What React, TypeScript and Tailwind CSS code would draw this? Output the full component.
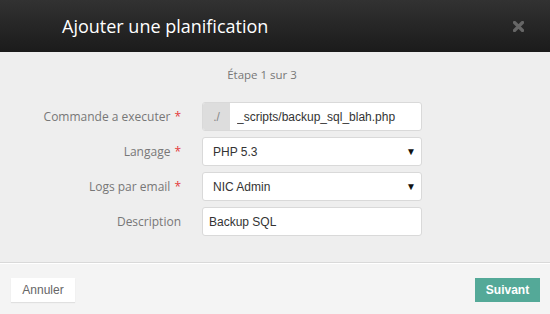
import { useState } from "react";

const labelFont = { fontFamily: '"Open Sans", "Noto Sans", sans-serif' };

function Label({ text, required }: { text: string; required?: boolean }) {
  return (
    <label className="w-[202px] shrink-0 pr-[21px] text-right text-[12px] text-[#777]" style={labelFont}>
      {text}
      {required && <span className="ml-1 text-[#e4393c]">*</span>}
    </label>
  );
}

export default function App() {
  const [cmd, setCmd] = useState("_scripts/backup_sql_blah.php");
  const [lang, setLang] = useState("PHP 5.3");
  const [logs, setLogs] = useState("NIC Admin");
  const [desc, setDesc] = useState("Backup SQL");

  return (
    <div className="flex h-[314px] w-[550px] flex-col bg-[#eeeeee] font-['Liberation_Sans',Arial,sans-serif]">
      {/* header */}
      <div className="flex h-[52px] shrink-0 items-center justify-between bg-gradient-to-b from-[#323232] to-[#1b1b1b] pl-[62px] pr-[26px]">
        <h1 className="text-[18px] leading-none text-white" style={labelFont}>
          Ajouter une planification
        </h1>
        <button className="text-[#666]" aria-label="Fermer">
          <svg width="11" height="11" viewBox="0 0 11 11">
            <path d="M1.5 1.5 L9.5 9.5 M9.5 1.5 L1.5 9.5" stroke="currentColor" strokeWidth="3.2" strokeLinecap="round" />
          </svg>
        </button>
      </div>

      {/* body */}
      <div className="flex flex-1 flex-col">
        <p className="pr-[26px] pt-[14px] text-center text-[11.5px] text-[#777]" style={labelFont}>
          Étape 1 sur 3
        </p>

        <div className="mt-[19px] flex flex-col gap-[6px]">
          <div className="flex items-center">
            <Label text="Commande a executer" required />
            <div className="flex h-[29px] w-[220px] overflow-hidden rounded-[3px] border border-[#d9d9d9] bg-white">
              <span className="flex w-[27px] shrink-0 items-center justify-center bg-[#dddddd] text-[12px] text-[#888]">./</span>
              <input
                value={cmd}
                onChange={(e) => setCmd(e.target.value)}
                className="min-w-0 flex-1 px-[7px] text-[12px] text-[#333] outline-none"
              />
            </div>
          </div>

          <div className="flex items-center">
            <Label text="Langage" required />
            <SelectBox value={lang} onChange={setLang} options={["PHP 5.3", "PHP 5.4", "PHP 5.5"]} />
          </div>

          <div className="flex items-center">
            <Label text="Logs par email" required />
            <SelectBox value={logs} onChange={setLogs} options={["NIC Admin", "NIC Tech"]} />
          </div>

          <div className="flex items-center">
            <Label text="Description" />
            <input
              value={desc}
              onChange={(e) => setDesc(e.target.value)}
              className="h-[29px] w-[220px] rounded-[3px] border border-[#d9d9d9] bg-white px-[6px] text-[12px] text-[#333] outline-none"
            />
          </div>
        </div>
      </div>

      {/* footer */}
      <div className="flex h-[52px] shrink-0 items-center justify-between border-t border-[#d9d9d9] bg-[#f4f4f4] pl-[11px] pr-[10px] pt-[2px] shadow-[inset_0_1px_0_#ffffff]">
        <button className="h-[24px] w-[64px] bg-white text-[12px] text-[#666] shadow-[0_1px_1px_rgba(0,0,0,0.08)]">
          Annuler
        </button>
        <button className="h-[24px] w-[65px] bg-[#54a998] text-[12px] font-bold text-white">
          Suivant
        </button>
      </div>
    </div>
  );
}

function SelectBox({ value, onChange, options }: { value: string; onChange: (v: string) => void; options: string[] }) {
  return (
    <div className="relative h-[29px] w-[220px]">
      <select
        value={value}
        onChange={(e) => onChange(e.target.value)}
        className="h-full w-full appearance-none rounded-[3px] border border-[#d9d9d9] bg-white pl-[10px] text-[12px] text-[#333] outline-none"
      >
        {options.map((o) => (
          <option key={o}>{o}</option>
        ))}
      </select>
      <span className="pointer-events-none absolute right-[6px] top-[10px] text-[10px] leading-none text-[#111]">▼</span>
    </div>
  );
}
